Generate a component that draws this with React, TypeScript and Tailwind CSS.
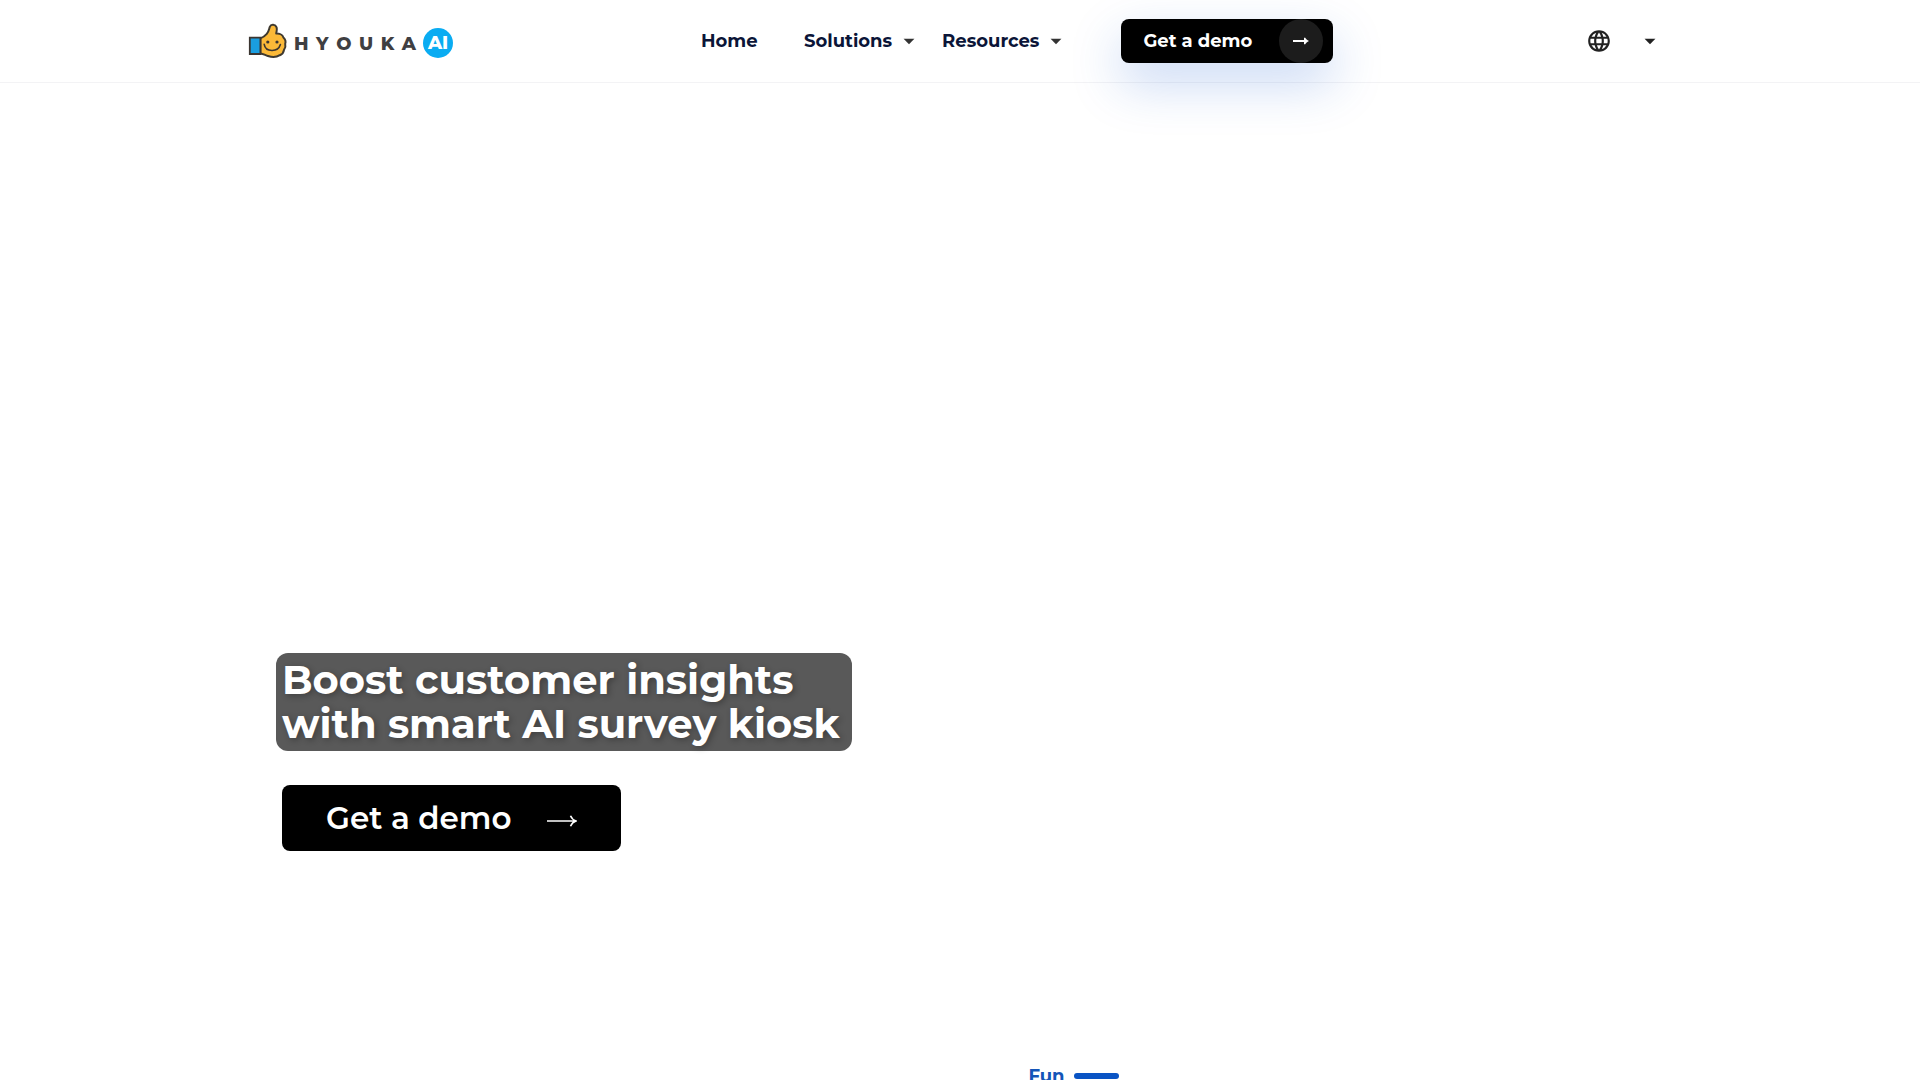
import React from "react";
import { MdArrowDropDown, MdLanguage } from "react-icons/md";

const menus = ["Solutions", "Resources"];

function ThumbMark() {
  return (
    <svg width="40" height="40" viewBox="0 0 40 40" fill="none" aria-hidden="true">
      <path
        d="M12.4 15.4C14.8 14.4 17 12.8 18.8 10.8C20.8 8.6 21 6 21.8 3.8C23 .8 27.4 1.2 28.6 4.4C29.4 6.8 28.4 8.6 28.2 10.6C31 10.4 34.6 11.6 35.4 14.4C37.4 16.2 38 18.4 37.2 20.8C37.8 23 37.2 25.2 36 26.8C35.6 29.4 34 31.4 31.8 32.2C28 34.6 23.4 34.2 20 33C17 32 15.4 30.6 12.4 30.4Z"
        fill="#fbb938"
        stroke="#3f3a30"
        strokeWidth="2"
        strokeLinejoin="round"
      />
      <path d="M1.8 14.6H12.4V31H1.8Z" fill="#1a9ee0" stroke="#3b3530" strokeWidth="1.8" />
      <circle cx="19.8" cy="19" r="1.6" fill="#3b3530" />
      <circle cx="29" cy="19" r="1.6" fill="#3b3530" />
      <path
        d="M16.2 21.4C17.6 29.4 30 29.6 32.4 21.6"
        stroke="#3b3530"
        strokeWidth="1.6"
        strokeLinecap="round"
      />
    </svg>
  );
}

function Logo() {
  return (
    <a href="#" aria-label="Hyouka AI" className="flex items-center pt-1 text-[18px] leading-6 font-extrabold">
      <ThumbMark />
      <span className="ml-1.5 flex w-[122px] justify-between pt-0.5 text-[#3f3f42]">
        {"HYOUKA".split("").map((letter) => (
          <span key={letter}>{letter}</span>
        ))}
      </span>
      <span className="ml-[7px] flex size-[30px] items-center justify-center rounded-full bg-[#0aacf2] text-white">
        AI
      </span>
    </a>
  );
}

function Header() {
  return (
    <header className="border-b border-[#f3f3f5]">
      <div className="mx-auto flex h-[82px] max-w-[1424px] items-center">
        <Logo />
        <nav className="ml-[248px] flex items-center text-[18px] leading-6 font-bold text-[#0b1538]">
          <a href="#" className="w-[103px]">
            Home
          </a>
          {menus.map((menu) => (
            <button key={menu} className="mr-5 flex items-center gap-1 whitespace-nowrap">
              {menu}
              <MdArrowDropDown size={26} color="#333" />
            </button>
          ))}
        </nav>
        <button className="ml-8 flex h-11 w-[212px] items-center justify-between rounded-lg bg-black pr-2.5 pl-[22px] text-[18px] leading-6 font-bold text-white shadow-[0_20px_50px_rgba(30,94,210,0.25)]">
          Get a demo
          <span className="flex size-11 items-center justify-center rounded-full bg-[#1c1c1c]">
            <svg width="16" height="8" viewBox="0 0 16 8" aria-hidden="true">
              <path d="M0 3H11V1L12 .4C13 2 14 3 16 4C14 5 13 6 12 7.6L11 7V5H0Z" fill="#fff" />
            </svg>
          </span>
        </button>
        <button aria-label="Language" className="mr-[9px] ml-auto flex items-center gap-[25px] text-[#222]">
          <MdLanguage size={26} />
          <MdArrowDropDown size={26} />
        </button>
      </div>
    </header>
  );
}

export default function App() {
  return (
    <div className="h-screen overflow-hidden bg-white font-['Montserrat','Inter',sans-serif]">
      <Header />
      <main>
        <section className="mx-auto flex max-w-[1368px] flex-col items-start pt-[570px]">
          <h1 className="w-144 rounded-xl bg-[#595959] px-1.5 py-[5px] text-[40px] leading-11 font-bold text-white text-shadow-[2px_2px_6px_rgba(0,0,0,0.3)]">
            Boost customer insights
            <br />
            with smart AI survey kiosk
          </h1>
          <button className="mt-[34px] ml-1.5 flex h-[66px] w-[339px] items-center justify-between rounded-lg bg-black px-11 text-[31px] leading-10 font-semibold text-white">
            Get a demo
            <svg width="30" height="12" viewBox="0 0 30 12" fill="none" className="mt-1.5" aria-hidden="true">
              <path d="M0 6H28M23.5 .8C24.6 3.4 26.4 5.2 29 6C26.4 6.8 24.6 8.6 23.5 11.2" stroke="#fff" strokeWidth="1.6" />
            </svg>
          </button>
        </section>
        <section className="mx-auto max-w-[1368px] pt-[213px]">
          <div className="ml-[55%] flex items-center gap-2.5 text-[18px] leading-6 font-bold text-[#1455b8]">
            Fun
            <span className="h-1.5 w-[45px] rounded-full bg-[#0a54c4]" />
          </div>
        </section>
      </main>
    </div>
  );
}
